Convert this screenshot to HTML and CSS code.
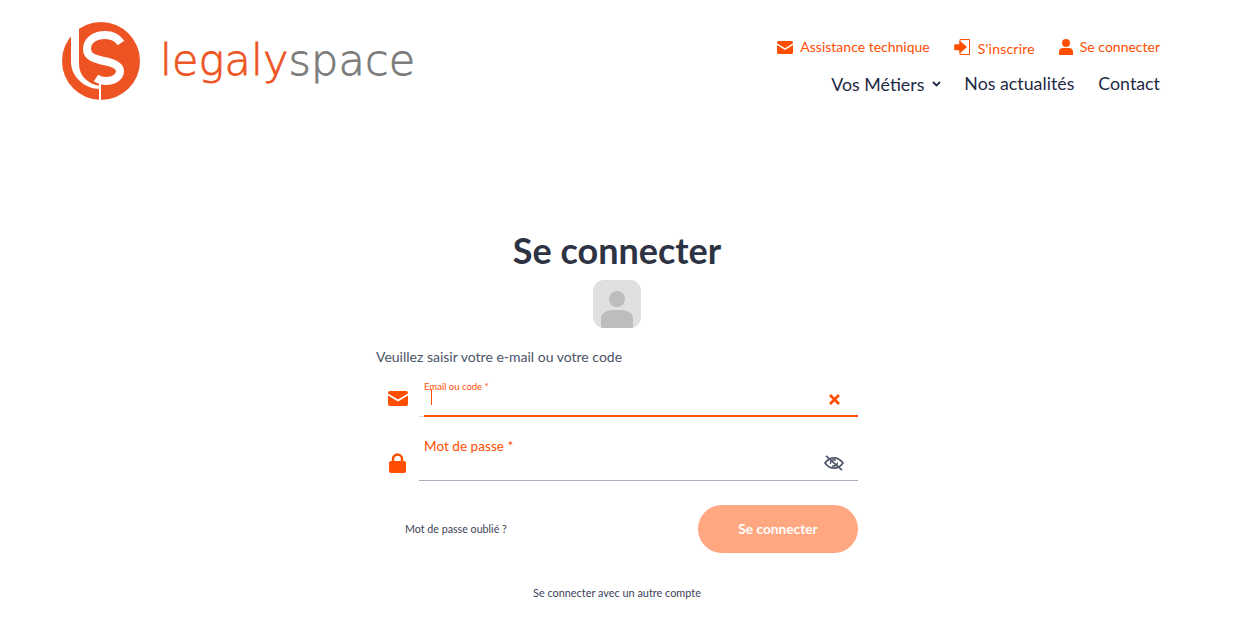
FILE: index.html
```html
<!DOCTYPE html>
<html lang="fr">
<head>
    <meta charset="UTF-8">
    <title>Se connecter</title>
    <link rel="stylesheet" href="styles.css">
</head>
<body>
    <header class="site-header">
        <a class="logo" href="#">
            <svg class="logo-mark" viewBox="0 0 78 78" width="78" height="78">
                <circle cx="39" cy="39" r="39" fill="#ee5423"/>
                <path d="M17 4 V42 C17 54 26 62 38 64 V67 C22 67 9 54 9 40 V10 Z" fill="#fff"/>
                <path d="M59 21 C55 15 49 13 43 13 C32 13 25 19 25 27 C25 35 33 37 42 39 C52 41 58 44 58 49 C58 55 52 59 44 59 C40 59 37 58 34 56" fill="none" stroke="#fff" stroke-width="8"/>
                <rect x="37" y="60" width="2" height="18" fill="#fff"/>
            </svg>
            <span class="logo-text"><span class="logo-legaly">legaly</span><span class="logo-space">space</span></span>
        </a>
        <nav class="nav">
            <div class="nav-top">
                <a href="#">
                    <svg width="16" height="13" viewBox="0 0 16 13"><path d="M1.5 0 H14.5 A1.5 1.5 0 0 1 16 1.5 V2.2 L8 7.2 L0 2.2 V1.5 A1.5 1.5 0 0 1 1.5 0 Z M0 4 L8 9 L16 4 V11.5 A1.5 1.5 0 0 1 14.5 13 H1.5 A1.5 1.5 0 0 1 0 11.5 Z" fill="#ff4e00"/></svg>
                    Assistance technique
                </a>
                <a href="#" class="link-register">
                    <svg width="16" height="17" viewBox="0 0 16 17"><path d="M6 3 V.5 H15.5 V15.5 H6 V13" fill="none" stroke="#ff4e00"/><path d="M1 6 H6 V3 L12 8 L6 13 V10.5 H1 Z" fill="#ff4e00" stroke="#ff4e00" stroke-width="1.6" stroke-linejoin="round"/></svg>
                    <span class="register-label">S'inscrire</span>
                </a>
                <a href="#">
                    <svg width="14" height="16" viewBox="0 0 14 16"><circle cx="7" cy="4" r="4" fill="#ff4e00"/><path d="M0 16 V12.5 C0 10 2 9 4 9 H10 C12 9 14 10 14 12.5 V16 Z" fill="#ff4e00"/></svg>
                    Se connecter
                </a>
            </div>
            <div class="nav-main">
                <a href="#" class="nav-dropdown">Vos Métiers
                    <svg width="9" height="6" viewBox="0 0 9 6"><path d="M1 1 L4.5 4.5 L8 1" fill="none" stroke="#1f2a44" stroke-width="1.8"/></svg>
                </a>
                <a href="#">Nos actualités</a>
                <a href="#">Contact</a>
            </div>
        </nav>
    </header>

    <main class="login">
        <h1>Se connecter</h1>
        <div class="avatar">
            <svg width="48" height="48" viewBox="0 0 48 48"><circle cx="24" cy="19" r="8" fill="#bdbdbd"/><path d="M8 48 V38 C8 33 14 30 20 30 H28 C34 30 40 33 40 38 V48 Z" fill="#bdbdbd"/></svg>
        </div>
        <p class="hint">Veuillez saisir votre e-mail ou votre code</p>

        <div class="field field-email">
            <svg class="field-icon" width="20" height="15" viewBox="0 0 20 15"><path d="M2 0 H18 A2 2 0 0 1 20 2 V2.6 L10 8.4 L0 2.6 V2 A2 2 0 0 1 2 0 Z M0 4.6 L10 10.4 L20 4.6 V13 A2 2 0 0 1 18 15 H2 A2 2 0 0 1 0 13 Z" fill="#ff4e00"/></svg>
            <div class="field-box">
                <label>Email ou code *</label>
                <span class="caret"></span>
                <svg class="field-action" width="11" height="11" viewBox="0 0 11 11"><path d="M1 1 L10 10 M10 1 L1 10" stroke="#ff4e00" stroke-width="2.8" fill="none"/></svg>
            </div>
        </div>

        <div class="field field-password">
            <svg class="field-icon" width="17" height="20" viewBox="0 0 17 20"><path d="M4 9 V6 A4.5 4.5 0 0 1 13 6 V9" fill="none" stroke="#ff4e00" stroke-width="2.4"/><rect y="8" width="17" height="12" rx="2" fill="#ff4e00"/></svg>
            <div class="field-box">
                <label>Mot de passe *</label>
                <svg class="field-action" width="20" height="16" viewBox="0 0 20 16"><path d="M1 8 C4 4 7 2.8 10 2.8 C13 2.8 16 4 19 8 C16 12 13 13.2 10 13.2 C7 13.2 4 12 1 8 Z" fill="none" stroke="#4d5669" stroke-width="1.7"/><path d="M6.5 9 A3.5 3.5 0 0 1 12 5.5 M8 11 C11 11.5 13.5 10 13.5 7.5" fill="none" stroke="#4d5669" stroke-width="1.5"/><path d="M2 .8 L18 15.2" stroke="#4d5669" stroke-width="1.7"/></svg>
            </div>
        </div>

        <div class="actions">
            <a href="#" class="forgot">Mot de passe oublié ?</a>
            <button type="button" class="submit">Se connecter</button>
        </div>
        <a href="#" class="other-account">Se connecter avec un autre compte</a>
    </main>
</body>
</html>
```

FILE: styles.css
```css
* {
    box-sizing: border-box;
}
body {
    margin: 0;
    font-family: "Lato", sans-serif;
    background: #fff;
    color: #2d3343;
    height: 640px;
    overflow: hidden;
}
a {
    text-decoration: none;
    color: inherit;
}

/* Header */
.site-header {
    display: flex;
    justify-content: space-between;
    align-items: flex-start;
    padding: 22px 80px 0 62px;
    height: 100px;
}
.logo {
    display: flex;
    align-items: center;
    gap: 20px;
}
.logo-text {
    font-family: "DejaVu Sans", sans-serif;
    font-weight: 200;
    font-size: 43px;
    letter-spacing: 0.1px;
    line-height: 72px;
    padding-bottom: 2px;
    -webkit-text-stroke: 0.8px;
}
.logo-legaly {
    color: #ee5423;
}
.logo-space {
    color: #7b7b7b;
}
.nav {
    display: flex;
    flex-direction: column;
    align-items: flex-end;
    gap: 13px;
    padding-top: 14px;
}
.nav-top {
    display: flex;
    gap: 24px;
    font-size: 14px;
    color: #ff4e00;
    line-height: 22px;
}
.nav-top a {
    display: flex;
    align-items: center;
    gap: 7px;
}
.nav-top .link-register {
    gap: 8px;
}
.register-label {
    position: relative;
    top: 2px;
    letter-spacing: 0.2px;
}
.nav-main {
    display: flex;
    gap: 24px;
    font-size: 17.8px;
    color: #1f2a44;
    line-height: 24px;
}
.nav-dropdown {
    display: flex;
    align-items: center;
    gap: 8px;
    margin-right: -1px;
    position: relative;
    top: 1px;
}

/* Form */
.login {
    width: 482px;
    margin: 127px 382px 0 376px;
    display: flex;
    flex-direction: column;
}
h1 {
    margin: 0;
    text-align: center;
    font-size: 36px;
    font-weight: 700;
    line-height: 46px;
    color: #2d3343;
}
.avatar {
    width: 48px;
    height: 48px;
    margin: 7px auto 0;
    background: #e0e0e0;
    border-radius: 11px;
    overflow: hidden;
}
.avatar svg {
    display: block;
}
.hint {
    margin: 20px 0 0;
    font-size: 14px;
    line-height: 18px;
    color: #4b5366;
}
.field {
    display: flex;
    margin-left: 12px;
    align-items: center;
}
.field-icon {
    flex: none;
}
.field-box {
    position: relative;
    flex: 1;
}
.field-box label {
    position: absolute;
    left: 5px;
    color: #ff4e00;
}
.field-email {
    margin-top: 11px;
    height: 40px;
}
.field-email .field-icon {
    margin-top: 3px;
    margin-right: 11px;
}
.field-email .field-box {
    height: 40px;
    border-bottom: 1px solid #d8dbe2;
}
.field-email .field-box::after {
    content: "";
    position: absolute;
    left: 5px;
    right: 0;
    bottom: -1px;
    height: 2px;
    background: #ff4e00;
}
.field-email label {
    top: 4px;
    font-size: 9.5px;
    line-height: 12px;
}
.caret {
    position: absolute;
    left: 12px;
    top: 12px;
    width: 1px;
    height: 16px;
    background: #ff4e00;
}
.field-email .field-action {
    position: absolute;
    right: 18px;
    top: 17px;
}
.field-password {
    margin-top: 16px;
    height: 48px;
}
.field-password .field-box {
    height: 48px;
    border-bottom: 1px solid #a9afbf;
}
.field-password .field-icon {
    margin-top: 12px;
    margin-left: 1px;
    margin-right: 13px;
}
.field-password label {
    top: 4px;
    font-size: 13.6px;
    line-height: 18px;
}
.field-password .field-action {
    position: absolute;
    right: 14px;
    top: 22px;
}
.actions {
    display: flex;
    justify-content: space-between;
    align-items: center;
    margin-top: 24px;
    padding-left: 29px;
}
.forgot {
    font-size: 10.7px;
    padding-bottom: 1px;
    color: #3c4458;
}
.submit {
    width: 160px;
    height: 48px;
    border: none;
    border-radius: 24px;
    padding: 0 0 2px;
    background: #ffa781;
    color: #fff;
    font-family: "Lato", sans-serif;
    font-size: 13.7px;
    font-weight: 700;
}
.other-account {
    margin-top: 33px;
    text-align: center;
    font-size: 10.9px;
    line-height: 14px;
    color: #3c4458;
}
```
